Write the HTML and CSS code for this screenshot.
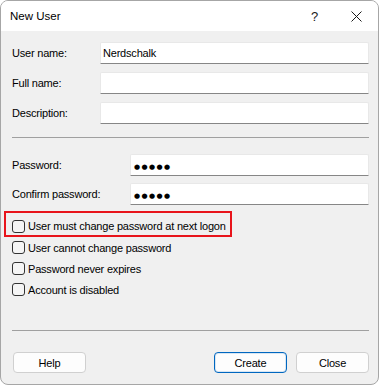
FILE: index.html
```html
<!DOCTYPE html>
<html>
<head>
<meta charset="utf-8">
<link rel="stylesheet" href="styles.css">
</head>
<body>
<div class="window">
  <div class="titlebar">
    <div class="title">New User</div>
    <div class="tb-help">?</div>
    <div class="tb-close">
      <svg width="11" height="11" viewBox="0 0 11 11"><path d="M0.5 0.5 L10.5 10.5 M10.5 0.5 L0.5 10.5" stroke="#1a1a1a" stroke-width="1" fill="none"/></svg>
    </div>
  </div>
  <div class="content">
    <div class="field">
      <div class="label">User name:</div>
      <div class="input wide">Nerdschalk</div>
    </div>
    <div class="field">
      <div class="label">Full name:</div>
      <div class="input wide"></div>
    </div>
    <div class="field">
      <div class="label">Description:</div>
      <div class="input wide"></div>
    </div>
    <div class="sep sep1"></div>
    <div class="field pw1">
      <div class="label lab2">Password:</div>
      <div class="input pw"><span class="dots">●●●●●</span></div>
    </div>
    <div class="field pw2">
      <div class="label lab2">Confirm password:</div>
      <div class="input pw"><span class="dots">●●●●●</span></div>
    </div>
    <div class="highlight">
      <div class="check"><span class="box"></span><span>User must change password at next logon</span></div>
    </div>
    <div class="check"><span class="box"></span><span>User cannot change password</span></div>
    <div class="check"><span class="box"></span><span>Password never expires</span></div>
    <div class="check"><span class="box"></span><span>Account is disabled</span></div>
    <div class="sep sep2"></div>
    <div class="buttons">
      <div class="btn help">Help</div>
      <div class="spacer"></div>
      <div class="btn primary">Create</div>
      <div class="btn">Close</div>
    </div>
  </div>
</div>
</body>
</html>
```

FILE: styles.css
```css
* { box-sizing: border-box; }
html, body { margin: 0; padding: 0; background: #ffffff; }
body {
  font-family: "Liberation Sans", Arial, sans-serif;
  font-size: 11px;
  letter-spacing: -0.2px;
  color: #000;
  white-space: nowrap;
}
.window {
  width: 379px;
  height: 385px;
  border: 1px solid #a6a6a6;
  border-radius: 8px;
  overflow: hidden;
  background: #f0f0f0;
  display: flex;
  flex-direction: column;
}
.titlebar {
  height: 30px;
  background: #ffffff;
  display: flex;
  align-items: center;
  padding-left: 9px;
  flex-shrink: 0;
}
.title { flex: 1; font-size: 11.5px; color: #000; letter-spacing: 0; }
.tb-help { width: 40px; font-size: 13px; color: #1a1a1a; }
.tb-close { width: 27px; display: flex; align-items: center; }
.content {
  padding: 11px 9px 0 11px;
  display: flex;
  flex-direction: column;
}
.field {
  display: flex;
  align-items: center;
  height: 22px;
  margin-bottom: 8px;
}
.label { width: 88px; flex-shrink: 0; }
.lab2 { width: 118px; }
.input {
  flex: 1;
  height: 22px;
  background: #fff;
  border: 1px solid #e8e8e8;
  border-bottom: 1px solid #868686;
  border-radius: 2px 2px 0 0;
  padding: 2px 2px 0 2px;
  line-height: 16px;
}
.dots {
  font-family: "DejaVu Sans", sans-serif;
  font-size: 7px;
  letter-spacing: 1.4px;
  line-height: 16px;
  padding-left: 1px;
}
.sep { height: 1px; background: #a0a0a0; flex-shrink: 0; }
.sep1 { margin-top: 5px; margin-bottom: 16px; }
.pw1 { margin-bottom: 7px; }
.pw2 { margin-bottom: 6px; }
.highlight {
  margin-left: -8px;
  width: 228px;
  height: 26px;
  border: 2px solid #e8141b;
  padding: 4px 0 0 6px;
}
.check {
  display: flex;
  align-items: center;
  height: 21px;
  gap: 3px;
}
.highlight .check { height: 18px; }
.box {
  width: 13px;
  height: 13px;
  border: 1px solid #333;
  border-radius: 3px;
  background: #f5f5f5;
  flex-shrink: 0;
}
.sep2 { margin-top: 30px; margin-bottom: 21px; }
.buttons { display: flex; height: 21px; gap: 9px; }
.spacer { flex: 1; }
.btn {
  width: 73px;
  height: 21px;
  background: #fdfdfd;
  border: 1px solid #d0d0d0;
  border-radius: 4px;
  display: flex;
  align-items: center;
  justify-content: center;
}
.help { margin-left: 1px; }
.primary { border: 1px solid #0067c0; box-shadow: inset 0 0 0 1px #d8e6f3; }
```
